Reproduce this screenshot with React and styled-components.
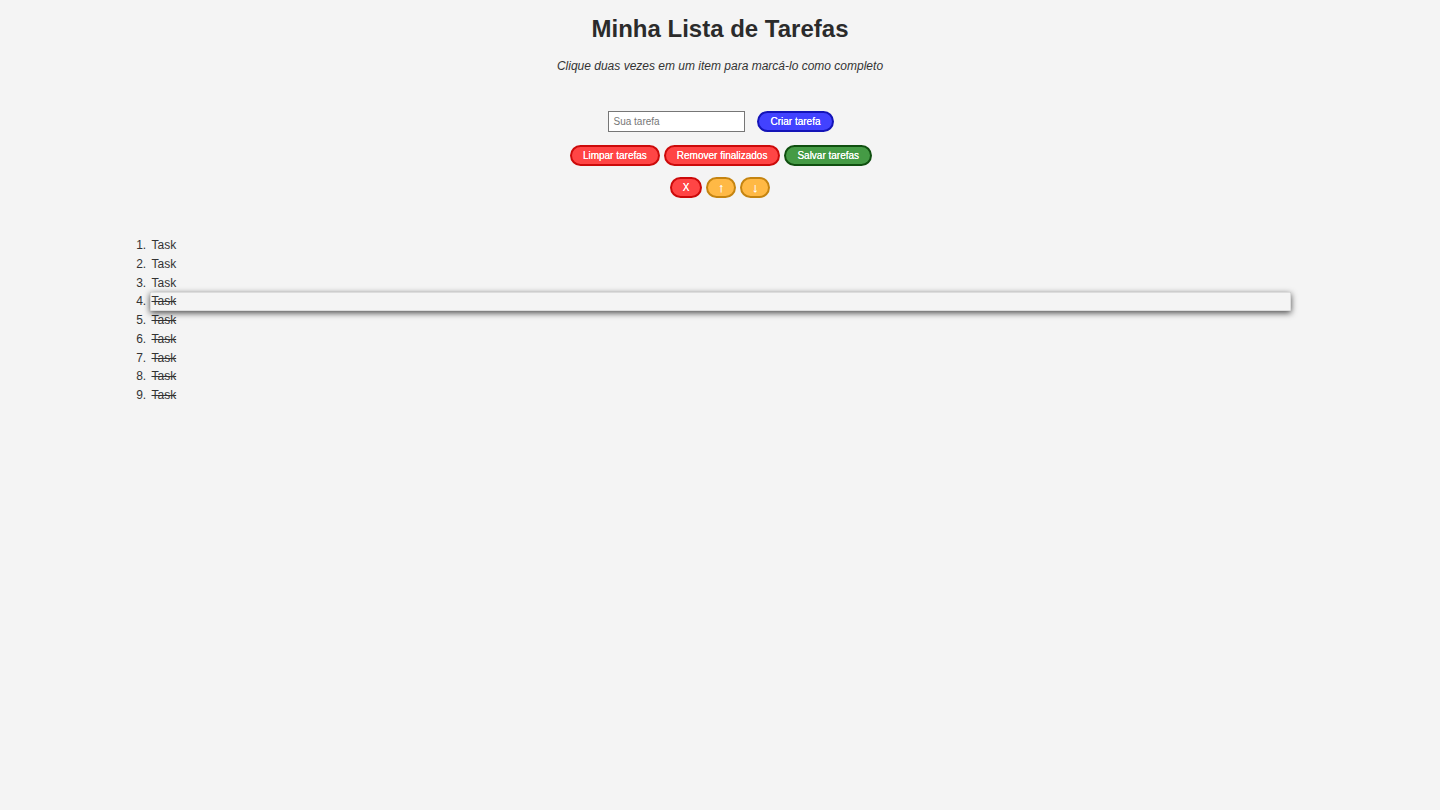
import React, { useState } from "react";
import styled, { createGlobalStyle } from "styled-components";

const GlobalStyle = createGlobalStyle`
  html, body {
    margin: 0;
    padding: 0;
    background: #f4f4f4;
    font-family: "Liberation Sans", Arial, sans-serif;
    color: #333;
  }
`;

const Page = styled.main`
  min-height: 810px;
  display: flex;
  flex-direction: column;
  align-items: center;
  padding-top: 15px;
  box-sizing: border-box;
`;

const Title = styled.h1`
  margin: 0;
  font-size: 24px;
  line-height: 28px;
  font-weight: bold;
  color: #2b2b2b;
`;

const Hint = styled.p`
  margin: 16px 0 0;
  font-size: 12px;
  line-height: 14px;
  font-style: italic;
  color: #333;
`;

const Row = styled.div`
  display: flex;
  justify-content: center;
  gap: ${(p) => p.gap || 4}px;
  margin-top: ${(p) => p.top}px;
  margin-left: ${(p) => p.shift || 0}px;
`;

const TaskInput = styled.input`
  width: 137px;
  height: 21px;
  box-sizing: border-box;
  border: 1px solid #767676;
  background: #fff;
  padding: 0 4px;
  font-family: inherit;
  font-size: 10px;
  color: #333;
  &::placeholder {
    color: #777;
  }
`;

const palette = {
  blue: ["#4242ff", "#1414b8"],
  red: ["#ff4545", "#cc0a0a"],
  green: ["#459b45", "#0f4f0f"],
  orange: ["#ffb945", "#c58410"],
};

const Btn = styled.button`
  height: 21px;
  box-sizing: border-box;
  padding: 0 ${(p) => p.pad ?? 10}px;
  min-width: ${(p) => p.minW || 0}px;
  border-radius: 11px;
  border: 2px solid ${(p) => palette[p.tone][1]};
  background: ${(p) => palette[p.tone][0]};
  color: #fff;
  font-family: inherit;
  font-size: ${(p) => p.size || 10}px;
  font-weight: ${(p) => (p.size ? "bold" : "normal")};
  line-height: 17px;
  cursor: pointer;
  text-shadow: 0 0 0.4px #fff;
`;

const List = styled.ol`
  width: 1141px;
  margin: 38px 0 0;
  padding: 0;
  list-style: decimal outside;
  font-size: 12px;
  color: #333;
`;

const Item = styled.li`
  line-height: 18.75px;
  height: 18.75px;
  padding-left: 2px;
  text-decoration: ${(p) => (p.done ? "line-through" : "none")};
  background: ${(p) => (p.selected ? "#f4f4f4" : "transparent")};
  box-shadow: ${(p) =>
    p.selected
      ? "0 2px 6px rgba(0,0,0,0.7), inset 0 0 0 0.5px rgba(0,0,0,0.2)"
      : "none"};
  position: ${(p) => (p.selected ? "relative" : "static")};
  user-select: none;
`;

const initial = [
  { name: "Task", done: false },
  { name: "Task", done: false },
  { name: "Task", done: false },
  { name: "Task", done: true },
  { name: "Task", done: true },
  { name: "Task", done: true },
  { name: "Task", done: true },
  { name: "Task", done: true },
  { name: "Task", done: true },
];

export default function App() {
  const [tasks, setTasks] = useState(initial);
  const [selected, setSelected] = useState(3);

  const toggle = (i) =>
    setTasks((t) => t.map((e, j) => (j === i ? { ...e, done: !e.done } : e)));

  return (
    <>
      <GlobalStyle />
      <Page>
        <Title>Minha Lista de Tarefas</Title>
        <Hint>Clique duas vezes em um item para marcá-lo como completo</Hint>

        <Row top={38} gap={12} shift={2}>
          <TaskInput placeholder="Sua tarefa" />
          <Btn tone="blue" pad={11}>Criar tarefa</Btn>
        </Row>

        <Row top={13} gap={4} shift={2}>
          <Btn tone="red" pad={11}>Limpar tarefas</Btn>
          <Btn tone="red" pad={11}>Remover finalizados</Btn>
          <Btn tone="green" pad={11}>Salvar tarefas</Btn>
        </Row>

        <Row top={11} gap={4}>
          <Btn tone="red" pad={11} minW={32}>X</Btn>
          <Btn tone="orange" pad={8} minW={30} size={13}>↑</Btn>
          <Btn tone="orange" pad={8} minW={30} size={13}>↓</Btn>
        </Row>

        <List>
          {tasks.map((t, i) => (
            <Item
              key={i}
              done={t.done}
              selected={selected === i}
              onClick={() => setSelected(i)}
              onDoubleClick={() => toggle(i)}
            >
              {t.name}
            </Item>
          ))}
        </List>
      </Page>
    </>
  );
}
